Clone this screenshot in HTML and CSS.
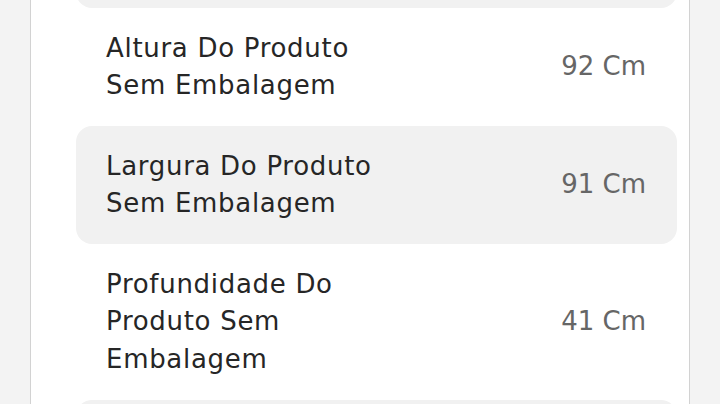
FILE: index.html
```html
<!DOCTYPE html>
<html lang="pt-BR">
<head>
    <meta charset="UTF-8">
    <title>Especificações</title>
    <link rel="stylesheet" href="styles.css">
</head>
<body>
    <div class="page">
        <div class="card">
            <ul class="specs">
                <li class="spec striped">
                    <span class="spec-name">Peso Do Produto Sem Embalagem</span>
                    <span class="spec-value">18 Kg</span>
                </li>
                <li class="spec">
                    <span class="spec-name">Altura Do Produto Sem Embalagem</span>
                    <span class="spec-value">92 Cm</span>
                </li>
                <li class="spec striped">
                    <span class="spec-name">Largura Do Produto Sem Embalagem</span>
                    <span class="spec-value">91 Cm</span>
                </li>
                <li class="spec">
                    <span class="spec-name">Profundidade Do Produto Sem Embalagem</span>
                    <span class="spec-value">41 Cm</span>
                </li>
                <li class="spec striped">
                    <span class="spec-name">Peso Do Produto Com Embalagem</span>
                    <span class="spec-value">20 Kg</span>
                </li>
            </ul>
        </div>
    </div>
</body>
</html>
```

FILE: styles.css
```css
*{
    margin:0;
    padding:0;
    box-sizing: border-box;
}
li{
    list-style: none;
}
html,body{
    height: 100%;
    overflow: hidden;
}
body{
    background: #f3f3f3;
    font-family: "DejaVu Sans", sans-serif;
}
.page{
    padding: 0 30px;
}
.card{
    background: #ffffff;
    border-left: 1px solid #d2d2d2;
    border-right: 1px solid #d2d2d2;
    padding: 0 12px 0 45px;
}
.specs{
    margin-top: -110px;
}
.spec{
    display: flex;
    align-items: center;
    justify-content: space-between;
    padding: 21.5px 31px 21.5px 30px;
    border-radius: 16px;
}
.spec.striped{
    background: #f1f1f1;
}
.spec-name{
    width: 290px;
    font-size: 26px;
    line-height: 37.5px;
    letter-spacing: 0.7px;
    color: #262626;
}
.spec-value{
    font-size: 26px;
    line-height: 37.5px;
    color: #666666;
    white-space: nowrap;
}
```
